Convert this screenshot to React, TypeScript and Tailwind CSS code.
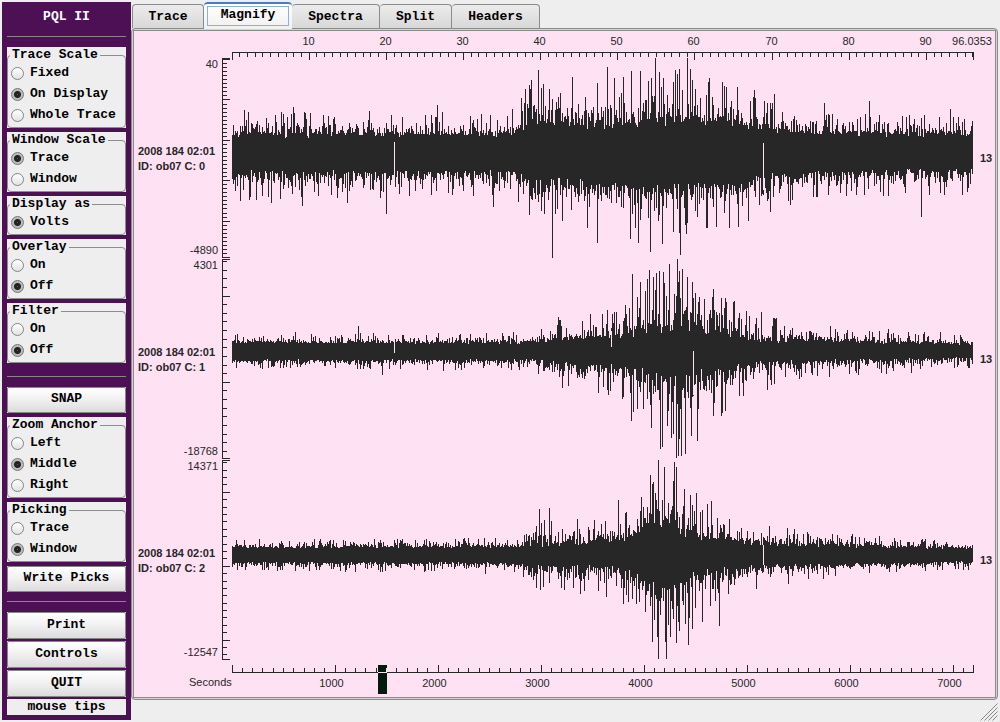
import { useState } from "react"
import clsx from "clsx"

type Tick = { at: number, major: boolean }

// x, shortest and tallest usual stroke above the centre, then the same below
type EnvelopePoint = [number, number, number, number, number]

type TraceData = {
    id: number,
    top: number,
    center: number,
    max: number,
    min: number,
    minor: number,
    major: number,
    envelope: EnvelopePoint[],
    up: [number, number][],
    down: [number, number][],
    gaps: [number, number, number][],
}

const PLOT_LEFT = 98;
const PLOT_WIDTH = 741;
const TRACE_HEIGHT = 199;
const INK = "#272727";
const PINK = "#ffe1f4";

const groups = {
    traceScale: { title: "Trace Scale", options: ["Fixed", "On Display", "Whole Trace"], selected: "On Display" },
    windowScale: { title: "Window Scale", options: ["Trace", "Window"], selected: "Trace" },
    displayAs: { title: "Display as", options: ["Volts"], selected: "Volts" },
    overlay: { title: "Overlay", options: ["On", "Off"], selected: "Off" },
    filter: { title: "Filter", options: ["On", "Off"], selected: "Off" },
    zoomAnchor: { title: "Zoom Anchor", options: ["Left", "Middle", "Right"], selected: "Middle" },
    picking: { title: "Picking", options: ["Trace", "Window"], selected: "Window" },
};

const tabs = ["Trace", "Magnify", "Spectra", "Split", "Headers"];

const traces: TraceData[] = [
    {
        id: 0, top: 27, center: 122, max: 40, min: -4890, minor: 100, major: 1000,
        envelope: [
            [98, 20, 38, 23, 42], [376, 20, 36, 21, 38], [382, 24, 46, 22, 44], [396, 34, 62, 30, 56],
            [470, 31, 62, 33, 58], [526, 36, 74, 38, 74], [566, 38, 72, 38, 74], [606, 32, 60, 34, 64],
            [640, 24, 46, 26, 50], [700, 21, 36, 22, 40], [839, 20, 36, 20, 38],
        ],
        up: [[110, 79], [159, 76], [303, 74], [391, 58], [397, 49], [404, 39], [438, 46], [463, 52], [473, 36], [480, 47],
            [497, 40], [506, 40], [521, 27], [525, 41], [529, 47], [541, 39], [545, 38], [553, 27], [556, 38], [592, 56],
            [603, 56], [620, 59], [640, 63], [690, 72], [735, 70], [816, 78]],
        down: [[106, 170], [115, 169], [137, 172], [168, 175], [213, 172], [252, 183], [359, 176], [395, 184], [418, 227],
            [428, 190], [453, 197], [463, 212], [496, 208], [504, 212], [516, 221], [528, 213], [546, 224], [582, 196],
            [604, 196], [787, 186]],
        gaps: [[260, 111, 160], [629, 112, 159]],
    },
    {
        id: 1, top: 228, center: 320, max: 4301, min: -18768, minor: 1000, major: 10000,
        envelope: [
            [98, 9, 15, 10, 16], [390, 9, 17, 10, 18], [426, 13, 28, 13, 30], [476, 17, 40, 16, 40],
            [494, 20, 46, 20, 52], [516, 28, 70, 32, 76], [550, 30, 78, 36, 92], [574, 24, 60, 28, 70],
            [596, 20, 48, 22, 54], [622, 14, 34, 15, 36], [690, 11, 23, 11, 23], [839, 8, 15, 8, 16],
        ],
        up: [[161, 301], [224, 295], [424, 286], [480, 281], [491, 274], [498, 243], [511, 260], [513, 248], [519, 246],
            [529, 241], [543, 228], [545, 240], [548, 238], [553, 246], [561, 262], [578, 266], [591, 267]],
        down: [[248, 344], [428, 357], [464, 362], [497, 390], [517, 397], [526, 418], [528, 416], [539, 403], [542, 427],
            [557, 405], [579, 385], [591, 380]],
        gaps: [[260, 310, 322], [559, 320, 364], [477, 300, 316]],
    },
    {
        id: 2, top: 429, center: 524, max: 14371, min: -12547, minor: 1000, major: 10000,
        envelope: [
            [98, 8, 14, 8, 14], [386, 9, 16, 9, 17], [400, 13, 34, 13, 30], [470, 15, 34, 16, 36],
            [506, 22, 48, 22, 52], [518, 34, 76, 40, 88], [536, 34, 74, 36, 82], [556, 24, 58, 24, 60],
            [590, 18, 40, 18, 44], [616, 13, 28, 14, 32], [680, 11, 22, 11, 22], [760, 9, 16, 9, 15], [839, 7, 13, 7, 13],
        ],
        up: [[405, 478], [415, 477], [484, 469], [518, 453], [524, 429], [530, 436], [540, 431], [542, 436], [556, 464], [573, 473]],
        down: [[518, 611], [524, 628], [532, 628], [536, 606], [545, 600], [554, 614], [558, 598], [568, 591], [585, 595]],
        gaps: [[629, 514, 534]],
    },
];

const round = Math.round;

function createRandom(seed: number) {
    let state = seed;
    return () => {
        state = (state * 1664525 + 1013904223) % 4294967296;
        return state / 4294967296;
    };
}

function envelopeAt(points: EnvelopePoint[], x: number) {
    const next = Math.max(1, points.findIndex((point) => point[0] >= x));
    const a = points[next - 1];
    const b = points[next];
    const t = (x - a[0]) / (b[0] - a[0]);
    return a.map((value, i) => value + (b[i] - value) * t);
}

// One vertical stroke per sample column
function waveformPath({ id, top, center, envelope, up, down, gaps }: TraceData) {
    const random = createRandom(id * 7919 + 17);
    const height = () => Math.min(1.3, -0.42 * Math.log(1 - random())) - random() * 0.3;
    let path = "";

    for (let x = PLOT_LEFT; x < PLOT_LEFT + PLOT_WIDTH; x++) {
        const [, upLow, upHigh, downLow, downHigh] = envelopeAt(envelope, x);
        let from = round(center - upLow - (upHigh - upLow) * height());
        let to = round(center + downLow + (downHigh - downLow) * height());
        from = up.find(([spike]) => spike === x)?.[1] ?? from;
        to = down.find(([spike]) => spike === x)?.[1] ?? to;
        from = Math.max(from, top);
        to = Math.min(to, top + TRACE_HEIGHT + 1);

        const gap = gaps.find(([column]) => column === x);
        if (gap) {
            path += `M${x + 0.5} ${Math.min(from, gap[1])}V${gap[1]}M${x + 0.5} ${gap[2]}V${Math.max(to, gap[2])}`;
        } else {
            path += `M${x + 0.5} ${from}V${to}`;
        }
    }
    return path;
}

function makeTicks(from: number, to: number, minor: number, major: number): Tick[] {
    const ticks: Tick[] = [];
    for (let i = Math.ceil(from / minor); i * minor <= to; i++) {
        ticks.push({ at: i * minor, major: (i * minor) % major === 0 });
    }
    return ticks;
}

function TopAxis() {
    const end = 96.0353;
    const ticks = makeTicks(0, end, 1, 10);
    const toX = (value: number) => Math.floor(PLOT_LEFT + (value / end) * PLOT_WIDTH) + 0.5;

    return (
        <g>
            <path
                d={`M${PLOT_LEFT} 21.5H840M839.5 21V29` + ticks.map((t) => `M${toX(t.at)} 21V${t.major ? 29 : 26}`).join("")}
                stroke={INK} shapeRendering="crispEdges"
            />
            {ticks.filter((t) => t.major && t.at > 0).map((t) => (
                <text key={t.at} x={toX(t.at) - 1} y={14} textAnchor="middle">{t.at}</text>
            ))}
            <text x={838} y={14} textAnchor="middle">96.0353</text>
        </g>
    )
}

function BottomAxis() {
    const ticks = makeTicks(0, 7190, 100, 1000);
    const toX = (value: number) => Math.floor(PLOT_LEFT + value * 0.103) + 0.5;

    return (
        <g>
            <rect x={244} y={634} width={9} height={29} fill="#001c0c" />
            <path
                d={`M${PLOT_LEFT} 641.5H840M839.5 634V642` + ticks.map((t) => `M${toX(t.at)} ${t.major ? 634 : 637}V642`).join("")}
                stroke={INK} shapeRendering="crispEdges"
            />
            <path d="M244 641.5H253M252.5 637V642" stroke={PINK} shapeRendering="crispEdges" />
            <text x={55} y={655}>Seconds</text>
            {ticks.filter((t) => t.major && t.at > 0).map((t) => (
                <text key={t.at} x={toX(t.at) - 4} y={656} textAnchor="middle">{t.at}</text>
            ))}
        </g>
    )
}

function TracePlot({ trace }: { trace: TraceData }) {
    const bottom = trace.top + TRACE_HEIGHT;
    const toY = (value: number) =>
        Math.floor(trace.top + ((trace.max - value) / (trace.max - trace.min)) * TRACE_HEIGHT) + 0.5;
    const ticks = makeTicks(trace.min, trace.max, trace.minor, trace.major);

    return (
        <g>
            <path
                d={`M88.5 ${trace.top}V${bottom + 1}M88 ${trace.top + 0.5}H96M88 ${bottom + 0.5}H96`
                    + ticks.map((t) => `M88 ${toY(t.at)}H${t.major ? 96 : 93}`).join("")}
                stroke={INK} shapeRendering="crispEdges"
            />
            <text x={84} y={trace.top + 10} textAnchor="end">{trace.max}</text>
            <text x={84} y={bottom - 3} textAnchor="end">{trace.min}</text>
            <g fontWeight="bold">
                <text x={4} y={trace.top + 97}>2008 184 02:01</text>
                <text x={4} y={trace.top + 112}>{`ID: ob07 C: ${trace.id}`}</text>
                <text x={846} y={trace.top + 104}>13</text>
            </g>
            <path d={waveformPath(trace)} stroke={INK} shapeRendering="crispEdges" />
        </g>
    )
}

function Seismogram() {
    return (
        <svg
            viewBox="0 0 861 666"
            className="block w-full bg-[#ffe1f4] text-[11px] font-normal"
            fontFamily="'Liberation Sans', Arial, sans-serif"
            fill={INK}
        >
            <TopAxis />
            {traces.map((trace) => <TracePlot key={trace.id} trace={trace} />)}
            <BottomAxis />
        </svg>
    )
}

function RadioGroup({ name }: { name: keyof typeof groups }) {
    const { title, options, selected } = groups[name];

    return (
        <div className="bg-[#eeeeee]">
            <fieldset className="min-w-0 rounded-sm border border-[#8b8f8b] pb-px">
                <legend className="ml-0.5 h-4 px-0.5 leading-4">{title}</legend>
                {options.map((option) => (
                    <label key={option} className="flex h-[21px] items-center gap-1.5 pl-[3px] leading-4 whitespace-nowrap">
                        <input
                            type="radio"
                            name={name}
                            defaultChecked={option === selected}
                            className="size-[13px] shrink-0 appearance-none rounded-full border border-[#858585] bg-linear-to-b from-white to-[#e2e2e2] checked:border-[#777777] checked:bg-[radial-gradient(circle_at_center,#666666_0px,#222222_1px,#222222_3px,#bbbbbb_4px)]"
                        />
                        <span className="pb-0.5">{option}</span>
                    </label>
                ))}
            </fieldset>
        </div>
    )
}

function SideButton({ label, className }: { label: string, className?: string }) {
    return (
        <div className="bg-[#dddddd]">
            <button
                type="button"
                className={clsx("flex w-full items-center justify-center rounded-xs border border-[#858985] bg-linear-to-b from-white via-[#f0f0f0] to-[#dcdcdc] pb-0.5", className)}
            >
                {label}
            </button>
        </div>
    )
}

function Sidebar() {
    return (
        <aside className="flex w-[129px] shrink-0 flex-col self-start bg-[#4e1055] px-[5px] pb-[5px]">
            <h1 className="h-[34px] pt-[7px] text-center leading-4 text-white">PQL II</h1>
            <hr className="mb-2.5 border-[#8b8389]" />
            <div className="flex flex-col gap-1">
                <RadioGroup name="traceScale" />
                <RadioGroup name="windowScale" />
                <RadioGroup name="displayAs" />
                <RadioGroup name="overlay" />
                <RadioGroup name="filter" />
            </div>
            <hr className="mt-[13px] mb-2.5 border-[#8b8389]" />
            <div className="flex flex-col gap-1">
                <SideButton label="SNAP" className="h-[26px]" />
                <RadioGroup name="zoomAnchor" />
                <RadioGroup name="picking" />
                <SideButton label="Write Picks" className="h-[26px]" />
            </div>
            <hr className="mt-[9px] mb-2.5 border-[#8b8389]" />
            <div className="flex flex-col gap-0.5">
                <SideButton label="Print" className="h-[27px]" />
                <SideButton label="Controls" className="h-[27px]" />
                <SideButton label="QUIT" className="h-[27px]" />
                <p className="h-4 bg-[#eeeeee] text-center leading-4">mouse tips</p>
            </div>
        </aside>
    )
}

export default function App() {
    const [active, setActive] = useState("Magnify");

    return (
        <div className="flex min-h-screen bg-[#eeeeee] pt-0.5 pr-0.5 pl-0.5 font-['Liberation_Mono',monospace] text-[13px] font-bold text-black">
            <Sidebar />
            <main className="flex min-w-0 flex-1 flex-col">
                <div role="tablist" className="flex h-[26px] items-end pl-px">
                    {tabs.map((tab) => (
                        <button
                            key={tab}
                            type="button"
                            role="tab"
                            aria-selected={tab === active}
                            onClick={() => setActive(tab)}
                            className={clsx(
                                "rounded-t-sm",
                                tab.length > 5 ? "w-[88px]" : "w-[72px]",
                                tab === active
                                    ? "z-10 -mb-px h-[27px] border-t-2 border-[#4a7ac8] bg-linear-to-b from-white to-[#f0f0f0] px-[3px] pb-0.5"
                                    : "h-6 border-t border-r border-[#8b8b8b] bg-linear-to-b from-[#ececec] to-[#d8d8d8] px-1",
                                tab === "Trace" && tab !== active && "border-l",
                            )}
                        >
                            <span className={clsx("flex items-center justify-center", tab === active && "h-5 border border-[#8fb0de] pb-0.5")}>
                                {tab}
                            </span>
                        </button>
                    ))}
                </div>
                <div className="rounded-sm border border-[#8b8b8b] bg-[#d4d4d0] p-px">
                    <div className="border border-[#8b8b8b]">
                        <Seismogram />
                    </div>
                </div>
                <svg viewBox="0 0 18 18" className="mt-[3px] size-[18px] self-end" stroke="#888888" fill="none">
                    <path d="M0.5 17.5L17.5 0.5M4.5 17.5L17.5 4.5M8.5 17.5L17.5 8.5M12.5 17.5L17.5 12.5" />
                </svg>
            </main>
        </div>
    )
}
